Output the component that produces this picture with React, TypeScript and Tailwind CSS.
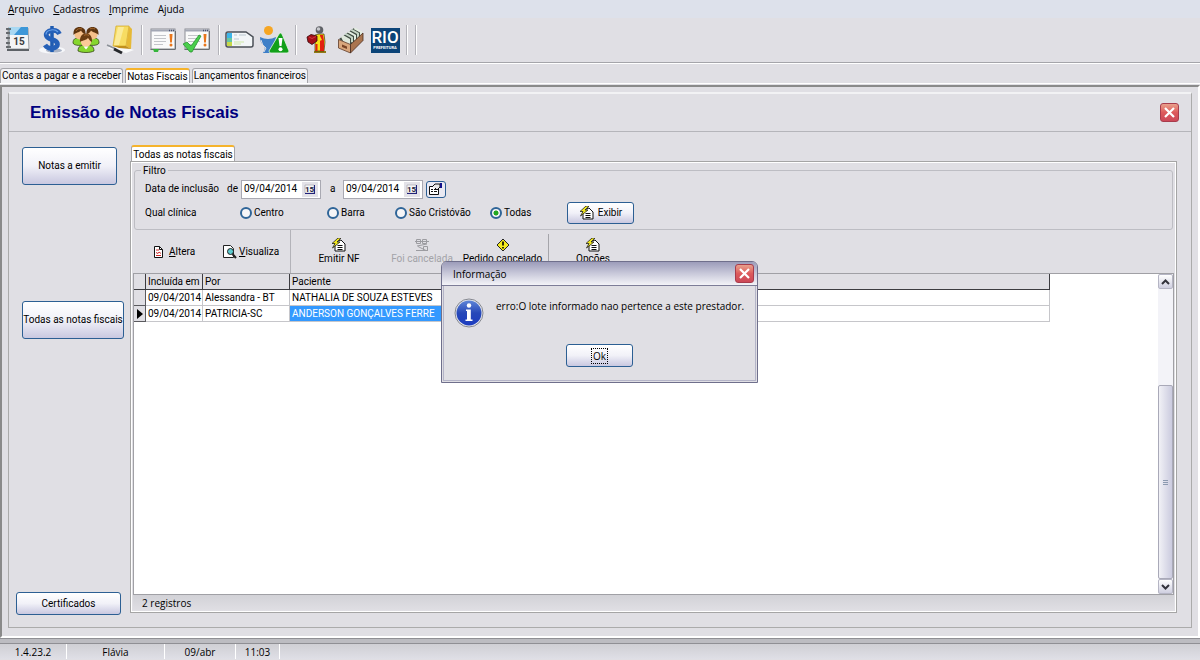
import type { ReactNode } from 'react';
import clsx from 'clsx';

const BUTTON =
  'rounded-[3px] border border-[#2c5f93] bg-linear-to-b from-white via-[#f1f1f8] to-[#c9c8e0] text-black';

const MENU = ['Arquivo', 'Cadastros', 'Imprime', 'Ajuda'];
const TABS = ['Contas a pagar e a receber', 'Notas Fiscais', 'Lançamentos financeiros'];

function CalendarIcon() {
  return (
    <svg width="26" height="28" viewBox="0 0 26 28">
      <path d="M3 2h20l1 21H3z" fill="#f4f5f6" stroke="#9aa0a6" />
      <path d="M4 1h19v8H4z" fill="#3d97d8" />
      <path d="M4 1h12l-7 8H4z" fill="#a9d8f2" />
      <path d="M2 23h22v2H2z" fill="#5d6166" />
      <path d="M1 3h5M1 7h4M1 12h4M1 17h4M1 21h5" stroke="#44484c" strokeWidth="1.5" />
      <path d="M4 2v20" stroke="#6a6e73" />
      <text x="14" y="19" textAnchor="middle" fontSize="10" fontWeight="bold" fill="#3a3d42">15</text>
    </svg>
  );
}

function DollarIcon() {
  return (
    <svg width="28" height="28" viewBox="0 0 28 28">
      <ellipse cx="14" cy="24" rx="13" ry="3.5" fill="#f6f7fa" />
      <ellipse cx="16" cy="24.5" rx="8" ry="2" fill="#aab4c6" />
      <path d="M14 0v26" stroke="#1f5bb0" strokeWidth="3.5" />
      <path
        d="M21.500 8c-1.500-3-5-4-8-3.500c-4 .5-6 3-5 5.500c1 3 5 3 8 4.500c4 2 4 6-.5 7.500c-4 1-7 0-9-3"
        fill="none"
        stroke="#2560b8"
        strokeWidth="4.800"
      />
      <path d="M20 6c-2-2-5-2.500-7-2c-3 .5-5 2-5 4.500" fill="none" stroke="#6ba3ea" strokeWidth="1.200" />
    </svg>
  );
}

function PeopleIcon() {
  return (
    <svg width="28" height="28" viewBox="0 0 28 28">
      <g stroke="#27340c" strokeWidth="0.7">
        <path d="M1 17c0-4 2-5 6-5s7 2 7 6c-4 2-12 2-13-1z" fill="#86d62e" />
        <path d="M27 17c0-4-2-5-6-5s-7 2-7 6c4 2 12 2 13-1z" fill="#86d62e" />
        <path d="M6 25c0-5 3-6 8-6s8 1 8 6c-4 2-12 2-16 0z" fill="#86d62e" />
      </g>
      <circle cx="7.500" cy="8.500" r="5" fill="#f6c08a" />
      <circle cx="20.500" cy="8.500" r="5" fill="#f6c08a" />
      <path d="M1.500 9C1 3 4 1 7.500 1S14 3 13.500 8C11 8 10 6 9 4.500C7 7 4 6 1.500 9z" fill="#5d3410" />
      <path d="M26.500 9C27 3 24 1 20.500 1S14 3 14.500 8C17 8 18 6 19 4.500C21 7 24 6 26.500 9z" fill="#5d3410" />
      <circle cx="14" cy="15.500" r="5.200" fill="#fbca98" />
      <path d="M8 16c-.5-6 2.500-8.500 6-8.500s6.500 2.500 6 8.500c-2-1-3-2.500-4-4c-2 2.500-5 2-8 4z" fill="#6b3d12" />
      <path d="M10 3c-3-1-5 0-6 2M23 3c-2-1-4-1-5 0M17 9.500c-2-1-4-1-5 0" stroke="#a8692c" fill="none" />
      <path d="M11.500 20.500l2.500 3l2.500-3z" fill="#fff" />
    </svg>
  );
}

function NoteIcon() {
  return (
    <svg width="28" height="30" viewBox="0 0 28 30">
      <path d="M1 23l9-3l18 5l-8 3z" fill="#f8f8f9" />
      <path d="M10 1h13l-3 20H7z" fill="#f7dc62" stroke="#d0a828" strokeWidth="0.700" />
      <path d="M12 2h6l-5 18H8z" fill="#fbeb98" />
      <path d="M23 1l3 3l-1 20l-5-3z" fill="#e6b936" />
      <path d="M7 21h13l5 3l-12-1z" fill="#c18f1c" />
      <path d="M1 20l9 4" stroke="#8b9097" strokeWidth="1.500" />
      <path d="M8 24l8 4" stroke="#25272b" strokeWidth="3" />
    </svg>
  );
}

function ListIcon({ checked }: { checked?: boolean }) {
  return (
    <svg width="28" height="28" viewBox="0 0 28 28">
      <rect x="2" y="3" width="24" height="20" fill="#fafafa" stroke="#8b8e93" />
      <path d="M2 4.500h24" stroke="#a3a7b4" strokeWidth="2" />
      <path d="M20 4.500h5" stroke="#48506e" strokeWidth="1.500" strokeDasharray="1 1" />
      <path d="M5 9.500h12M5 12.500h12M5 15.500h12M5 18.500h9" stroke="#c3c5c9" />
      <path d="M1.500 23.500h25M26.500 5v18" stroke="#6b6e72" />
      <path d="M20.500 8h3l-.6 8.500h-1.800z" fill="#e8761c" />
      <circle cx="22" cy="19" r="1.500" fill="#e8761c" />
      {checked ? (
        <path d="M0 18l4-2l4 4l8-11l2 1l-9 16H7z" fill="#4ace4c" stroke="#1c8a27" strokeWidth="0.700" />
      ) : (
        <path d="M4 23h6l-1 3H5z" fill="#36b53c" />
      )}
    </svg>
  );
}

function CardIcon() {
  return (
    <svg width="30" height="20" viewBox="0 0 30 20">
      <path d="M3 2h18l7 5v8q0 2-2 2H3q-2 0-2-2V4q0-2 2-2z" fill="#f3f6f8" stroke="#4b5057" strokeWidth="1.500" />
      <path d="M2 3h5v5H2z" fill="#3db4e8" />
      <path d="M2 8h5v4H2z" fill="#67c7a2" />
      <path d="M2 12h5v4H2z" fill="#c6d848" />
      <path d="M9 5h3M14 5h7M9 9h5" stroke="#bcc9d2" />
      <path d="M9 12h10M9 14h7" stroke="#cfe9a8" />
    </svg>
  );
}

function PersonAlertIcon() {
  return (
    <svg width="30" height="30" viewBox="0 0 30 30">
      <circle cx="9.500" cy="5.500" r="4.500" fill="#f6a623" />
      <path d="M1 12q8 4 16 0l-3 16H4q3-5 1-7q-4-3-4-9z" fill="#3e7fc8" />
      <path d="M2 15q1 6 5 8l-2 4" stroke="#e0dfe4" fill="none" />
      <path d="M20 9q1.500-2 3 0l7 17q0 2-2 2H12q-2 0-2-2z" fill="#12a019" stroke="#e8f4e8" strokeWidth="0.800" />
      <path d="M19.500 13h4l-1 8h-2z" fill="#fff" />
      <circle cx="21.500" cy="24.300" r="2" fill="#fff" />
    </svg>
  );
}

function FigureIcon() {
  return (
    <svg width="22" height="30" viewBox="0 0 22 30">
      <path d="M8 26h12v2H8z" fill="#8f7a16" />
      <path d="M9 10l4-1h5l1 8l-1 9H9z" fill="#f7e016" stroke="#2a1c08" strokeWidth="0.6" />
      <path d="M14 10h3l1 6v10h-4z" fill="#e2200f" />
      <path d="M9.500 19h2v7h-2z" fill="#e2200f" />
      <path d="M9 10l5 1l2 4l-5 2z" fill="#f7e016" />
      <path d="M1 12l4-2.500l6 1.500v5l-5 3.500l-4-2.500z" fill="#a60f18" stroke="#35070a" strokeWidth="0.8" />
      <path d="M3 12l3 1.500l4-2" stroke="#e0454c" strokeWidth="0.8" fill="none" />
      <circle cx="13.500" cy="5" r="3.800" fill="#5f6166" />
      <circle cx="12.500" cy="4" r="1.800" fill="#c9cace" />
    </svg>
  );
}

function FileBoxIcon() {
  return (
    <svg width="28" height="30" viewBox="0 0 28 30">
      <path d="M2 14L17 3l9 6l-11 13z" fill="#3f4b42" />
      <path d="M4 12l2-2l7 4v6l-6-2z" fill="#dfe8dc" />
      <path d="M7.500 9.500l1.500-1.500l7 4v6l-2-1v-4z" fill="#c5d5c6" />
      <path d="M10.500 7.500l1.500-1.500l7 4v5l-2 1v-5z" fill="#e4ede2" />
      <path d="M13.500 5.500l1.500-1.500l7 4v4l-2 2v-5z" fill="#c5d5c6" />
      <path d="M16.500 4l1.500-1.500l7 4v3l-2 2V7.500z" fill="#e4ede2" />
      <path d="M1.500 14.500l12 5v8.500l-12-5z" fill="#d9a67c" stroke="#5e3b28" strokeWidth="0.8" />
      <path d="M13.500 19.500L26 8v7.500L13.500 28z" fill="#a9744f" stroke="#4a2d20" strokeWidth="0.8" />
      <path d="M5 19.500l5 2v2.500l-5-2z" fill="#7a4426" />
    </svg>
  );
}

function LightningPageIcon() {
  return (
    <svg width="16" height="14" viewBox="0 0 16 14">
      <path d="M5 4l5-2l4 4v7H4V7z" fill="#fff" stroke="#111" />
      <path d="M6.500 7.500h5M6.500 9.500h5M6.500 11.500h5" stroke="#111" />
      <path d="M7 0L1 5.500h3L1.500 10L9 4H6l4-4z" fill="#f4ea1c" stroke="#222" strokeWidth="0.800" />
    </svg>
  );
}

function CancelledIcon() {
  return (
    <svg width="16" height="14" viewBox="0 0 16 14" fill="none" stroke="#9c9ca1">
      <path d="M2.500 1.500h4v4h-4zM8.500 1.500h4v4h-4zM1 3.500h14M3 8l10-2M4 8.500l8 4M2 12.500h12M9.500 8.500h4v4h-4z" />
    </svg>
  );
}

function WarningIcon() {
  return (
    <svg width="14" height="14" viewBox="0 0 14 14">
      <path d="M7 1l6 6l-6 6l-6-6z" fill="#f4ea1c" stroke="#222" />
      <path d="M7 3.500v4M7 9v1.500" stroke="#000" strokeWidth="1.600" />
    </svg>
  );
}

function EditPageIcon() {
  return (
    <svg width="12" height="14" viewBox="0 0 12 14">
      <path d="M1.500 1.500h5l3 3v8h-8z" fill="#fff" stroke="#111" />
      <path d="M6.500 1.500v3h3" fill="none" stroke="#111" />
      <path d="M3 5h3M3 7.500l2 1l1-1.500l2 1.500M3 10.500h5" stroke="#d02a2a" fill="none" />
    </svg>
  );
}

function PreviewIcon() {
  return (
    <svg width="15" height="15" viewBox="0 0 15 15">
      <path d="M1.500 1.500h7l3 3v9h-10z" fill="#fff" stroke="#222" />
      <circle cx="8.500" cy="7.500" r="3" fill="#5ccbd0" stroke="#222" />
      <path d="M10.500 10l3.500 4" stroke="#222" strokeWidth="2" />
    </svg>
  );
}

function PropertiesIcon() {
  return (
    <svg width="15" height="14" viewBox="0 0 15 14">
      <path d="M1.500 4.500h9v8h-9z" fill="#fff" stroke="#111" />
      <path d="M3 7.500h2M3 9.500h2M6 7.500h3M6 9.500h3" stroke="#111" />
      <path d="M4 5l3-3h5v3l-3 3l-2-2" fill="#e8e8e8" stroke="#111" />
      <path d="M12 1h2v5h-2z" fill="#12128a" />
    </svg>
  );
}

function MiniCalendarIcon() {
  return (
    <svg width="12" height="11" viewBox="0 0 12 11">
      <path d="M1 1h9v8H1z" fill="#f6f6f6" stroke="#8f8f98" strokeWidth="0.500" />
      <path d="M1 9.500h10M10.500 1v9" stroke="#22227a" />
      <text x="5.500" y="8" textAnchor="middle" fontSize="8" fontWeight="bold" fill="#1c1c3c">15</text>
    </svg>
  );
}

function InfoIcon() {
  return (
    <svg width="30" height="30" viewBox="0 0 30 30">
      <defs>
        <linearGradient id="info" x1="0" y1="0" x2="0" y2="1">
          <stop offset="0" stopColor="#5f86d8" />
          <stop offset="0.5" stopColor="#2748b8" />
          <stop offset="1" stopColor="#1d3cc0" />
        </linearGradient>
      </defs>
      <circle cx="15" cy="15" r="14" fill="#e4e6ec" stroke="#85878f" />
      <circle cx="15" cy="15" r="12.500" fill="url(#info)" />
      <circle cx="15" cy="7.500" r="2.200" fill="#fff" />
      <path d="M12 11.500h4.800v10H18.500v1.500h-7v-1.500H13v-8.500h-1z" fill="#fff" />
    </svg>
  );
}

function CloseButton({ label }: { label: string }) {
  return (
    <button
      type="button"
      aria-label={label}
      className="flex size-[19px] shrink-0 items-center justify-center rounded-[3px] border border-[#a83c4c] bg-linear-to-b from-[#e8a08c] via-[#dd5a5c] to-[#cc4858]"
    >
      <svg width="13" height="13" viewBox="0 0 13 13">
        <path d="M2 2l9 9M11 2l-9 9" stroke="#fff" strokeWidth="2.200" />
      </svg>
    </button>
  );
}

function ToolButton({ label, children }: { label: string; children: ReactNode }) {
  return (
    <button type="button" aria-label={label} className="flex h-8 w-[34px] items-center justify-center">
      {children}
    </button>
  );
}

function Separator() {
  return <div className="mr-[3px] ml-1 h-[30px] w-[2px] border-l border-[#b3b3b9] bg-white" />;
}

function DateField({ id, label }: { id: string; label: string }) {
  return (
    <>
      <label htmlFor={id} className="min-w-[10px]">{label}</label>
      <div className="flex h-[19px] w-20 items-center border border-[#a9a9b2] bg-white">
        <input id={id} defaultValue="09/04/2014" className="w-[60px] min-w-0 pl-[2px] outline-none" />
        <button
          type="button"
          aria-label="Abrir calendário"
          className="flex h-[15px] w-4 items-center justify-center bg-[#e3e2e8]"
        >
          <MiniCalendarIcon />
        </button>
      </div>
    </>
  );
}

function ClinicRadio({ label, checked, className }: { label: string; checked?: boolean; className: string }) {
  return (
    <label className={clsx('flex shrink-0 items-center gap-[2px]', className)}>
      <input
        type="radio"
        name="clinica"
        defaultChecked={checked}
        className="size-3 appearance-none rounded-full border-2 border-[#2f6598] bg-[#f5f5f7] checked:bg-radial checked:from-[#22a822] checked:from-40% checked:to-[#f5f5f7] checked:to-50%"
      />
      {label}
    </label>
  );
}

function StackedAction({
  label,
  icon,
  className,
  disabled,
}: {
  label: string;
  icon: ReactNode;
  className: string;
  disabled?: boolean;
}) {
  return (
    <button
      type="button"
      disabled={disabled}
      className={clsx('flex flex-col items-center whitespace-nowrap disabled:text-[#a3a3a8]', className)}
    >
      {icon}
      {label}
    </button>
  );
}

function Menubar() {
  return (
    <nav className="flex h-[18px] items-center gap-[9px] bg-[#dde1eb] pl-2 font-['Open_Sans',sans-serif]">
      {MENU.map((item) => (
        <button key={item} type="button">
          {item === 'Ajuda' ? (
            item
          ) : (
            <>
              <span className="underline">{item[0]}</span>
              {item.slice(1)}
            </>
          )}
        </button>
      ))}
    </nav>
  );
}

function Toolbar() {
  return (
    <div className="flex h-[45px] items-center border-b border-[#a5a5aa] pl-px">
      <ToolButton label="Agenda"><CalendarIcon /></ToolButton>
      <ToolButton label="Financeiro"><DollarIcon /></ToolButton>
      <ToolButton label="Pacientes"><PeopleIcon /></ToolButton>
      <ToolButton label="Anotações"><NoteIcon /></ToolButton>
      <Separator />
      <ToolButton label="Pendências"><ListIcon /></ToolButton>
      <ToolButton label="Concluídas"><ListIcon checked /></ToolButton>
      <Separator />
      <ToolButton label="Cartão"><CardIcon /></ToolButton>
      <ToolButton label="Alertas"><PersonAlertIcon /></ToolButton>
      <Separator />
      <ToolButton label="Entregas"><FigureIcon /></ToolButton>
      <ToolButton label="Arquivo de fichas"><FileBoxIcon /></ToolButton>
      <ToolButton label="Rio Prefeitura">
        <span className="flex h-[25px] w-[29px] flex-col items-center bg-[#0c4478] text-white">
          <span className="text-[17px] leading-[18px] font-medium">RIO</span>
          <span className="text-[4px] leading-[4px] font-bold">PREFEITURA</span>
        </span>
      </ToolButton>
      <Separator />
      <Separator />
    </div>
  );
}

function WindowTabs() {
  return (
    <div className="flex h-[21px] items-end gap-[2px] border-y border-white">
      {TABS.map((tab) => (
        <button
          key={tab}
          type="button"
          className={clsx(
            'h-[15px] rounded-t-[3px] border border-b-0 px-px whitespace-nowrap',
            tab === 'Notas Fiscais'
              ? 'border-[#a5a5aa] border-t-2 border-t-[#f5b32c] bg-white leading-[13px]'
              : 'border-[#a5a5aa] bg-[#f3f3f6] leading-[14px]',
          )}
        >
          {tab}
        </button>
      ))}
    </div>
  );
}

function Sidebar() {
  return (
    <aside className="flex w-[121px] shrink-0 flex-col justify-between pt-[15px] pb-3">
      <div className="flex flex-col items-start pl-[13px]">
        <button type="button" className={clsx(BUTTON, 'h-[38px] w-[95px]')}>Notas a emitir</button>
        <button type="button" className={clsx(BUTTON, 'mt-[116px] h-[38px] w-[102px] whitespace-nowrap')}>
          Todas as notas fiscais
        </button>
      </div>
      <div className="pl-[7px]">
        <button type="button" className={clsx(BUTTON, 'h-[23px] w-[105px]')}>Certificados</button>
      </div>
    </aside>
  );
}

function Filter() {
  return (
    <fieldset className="relative mx-[2px] mt-[7px] h-[60px] rounded-[3px] border border-[#bdbdc3] pl-[10px]">
      <legend className="absolute -top-[7px] left-[6px] bg-[#e0dfe4] px-[2px] leading-[14px]">Filtro</legend>
      <div className="mt-2 flex h-5 items-center gap-[3px]">
        <span className="w-[79px]">Data de inclusão</span>
        <DateField id="de" label="de" />
        <span className="w-[3px]" />
        <DateField id="ate" label="a" />
        <button
          type="button"
          aria-label="Período"
          className="flex h-[17px] w-5 items-center justify-center rounded-[3px] border border-[#2c5f93] bg-[#e9e9f2]"
        >
          <PropertiesIcon />
        </button>
      </div>
      <div className="mt-[2px] flex h-6 items-center">
        <span className="w-[95px]">Qual clínica</span>
        <ClinicRadio label="Centro" className="w-[87px]" />
        <ClinicRadio label="Barra" className="w-[68px]" />
        <ClinicRadio label="São Cristóvão" className="w-[95px]" />
        <ClinicRadio label="Todas" checked className="w-[77px]" />
        <button type="button" className={clsx(BUTTON, 'flex h-[22px] w-[67px] items-center justify-center gap-[3px]')}>
          <LightningPageIcon />
          Exibir
        </button>
      </div>
    </fieldset>
  );
}

function Actions() {
  return (
    <div className="flex h-[43px] items-center">
      <div className="flex h-full w-[159px] items-center border-r border-[#b3b3b9] pl-[21px]">
        <button type="button" className="flex w-[69px] items-center gap-1">
          <EditPageIcon />
          <span><span className="underline">A</span>ltera</span>
        </button>
        <button type="button" className="flex items-center gap-[2px]">
          <PreviewIcon />
          <span><span className="underline">V</span>isualiza</span>
        </button>
      </div>
      <StackedAction label="Emitir NF" icon={<LightningPageIcon />} className="w-24" />
      <StackedAction label="Foi cancelada" icon={<CancelledIcon />} className="w-[70px]" disabled />
      <StackedAction label="Pedido cancelado" icon={<WarningIcon />} className="w-[91px]" />
      <div className="h-9 w-px bg-[#a5a5aa]" />
      <StackedAction label="Opções" icon={<LightningPageIcon />} className="w-[88px]" />
    </div>
  );
}

function InvoiceTable() {
  const head = 'h-4 border-r border-b border-[#3c3c40] bg-[#e0dfe4] px-[2px] text-left font-normal';
  const line = 'h-4 border-r border-b border-[#c6c6ca]';
  const cell = clsx(line, 'px-[2px]');
  return (
    <table className="h-fit w-[916px] table-fixed border-separate border-spacing-0 leading-[15px] whitespace-nowrap">
      <thead>
        <tr>
          <th className={clsx(head, 'w-[12px]')} aria-label="Atual" />
          <th className={clsx(head, 'w-[57px]')}>Incluída em</th>
          <th className={clsx(head, 'w-[87px]')}>Por</th>
          <th className={head}>Paciente</th>
        </tr>
      </thead>
      <tbody>
        <tr>
          <td className="border-r border-b border-[#5a5a5e] bg-[#e0dfe4]" />
          <td className={cell}>09/04/2014</td>
          <td className={cell}>Alessandra - BT</td>
          <td className={cell}>NATHALIA DE SOUZA ESTEVES</td>
        </tr>
        <tr>
          <td className="border-r border-b border-[#5a5a5e] bg-[#e0dfe4]">
            <svg width="8" height="10" viewBox="0 0 8 10" className="ml-[2px]">
              <path d="M1 0l6 5l-6 5z" fill="#000" />
            </svg>
          </td>
          <td className={cell}>09/04/2014</td>
          <td className={cell}>PATRICIA-SC</td>
          <td className={line}>
            <div className="w-40 bg-[#3399ff] px-[2px] text-white">ANDERSON GONÇALVES FERRE</div>
          </td>
        </tr>
      </tbody>
    </table>
  );
}

function ScrollArrow({ label, d }: { label: string; d: string }) {
  return (
    <button
      type="button"
      aria-label={label}
      className="flex h-[15px] items-center justify-center rounded-[2px] border border-[#b5b5c4] bg-linear-to-b from-white to-[#cfcfe0]"
    >
      <svg width="9" height="6" viewBox="0 0 9 6">
        <path d={d} fill="none" stroke="#33333c" strokeWidth="2" />
      </svg>
    </button>
  );
}

function Scrollbar() {
  return (
    <div className="flex w-[15px] shrink-0 flex-col bg-[#f3f3f8]">
      <ScrollArrow label="Rolar para cima" d="M1 5l3.500-3.500L8 5" />
      <div className="flex-[97]" />
      <div className="flex flex-[193] flex-col items-center justify-center gap-px rounded-[2px] border border-[#a9a9b8] bg-linear-to-r from-[#f1f1f6] to-[#cbcbdf]">
        <div className="h-px w-[5px] bg-[#8c9ab0]" />
        <div className="h-px w-[5px] bg-[#8c9ab0]" />
        <div className="h-px w-[5px] bg-[#8c9ab0]" />
      </div>
      <ScrollArrow label="Rolar para baixo" d="M1 1l3.500 3.500L8 1" />
    </div>
  );
}

function InvoicePanel() {
  return (
    <main className="flex min-w-0 flex-1 flex-col pt-[13px] pr-[14px] pb-[14px]">
      <div className="flex">
        <button
          type="button"
          className="ml-px h-4 w-[104px] rounded-t-[3px] border border-t-2 border-b-0 border-[#a5a5aa] border-t-[#f5b32c] bg-white leading-[13px] whitespace-nowrap"
        >
          Todas as notas fiscais
        </button>
      </div>
      <section className="flex flex-1 flex-col border border-[#a5a5a5] p-px outline-1 -outline-offset-2 outline-white">
        <Filter />
        <Actions />
        <div className="mx-px flex flex-1 border border-[#a0a0a5] bg-white">
          <InvoiceTable />
          <div className="flex-1" />
          <Scrollbar />
        </div>
        <p className="mx-px flex h-4 items-center bg-linear-to-b from-[#d2d2d7] to-[#e0dfe4] pl-[9px] font-['Open_Sans',sans-serif]">
          2 registros
        </p>
      </section>
    </main>
  );
}

function StatusBar() {
  const cell = 'flex h-full items-center justify-center border-r border-white';
  return (
    <footer className="mb-px flex h-4 items-center border-t border-[#8f8f94] bg-linear-to-b from-[#cfcfd4] to-[#dfdfe6] font-['Open_Sans',sans-serif]">
      <span className={clsx(cell, 'w-[67px]')}>1.4.23.2</span>
      <span className={clsx(cell, 'w-[98px]')}>Flávia</span>
      <span className={clsx(cell, 'w-[71px]')}>09/abr</span>
      <span className={clsx(cell, 'w-[44px]')}>11:03</span>
    </footer>
  );
}

function ErrorDialog() {
  return (
    <div className="fixed inset-0 flex items-center justify-center pr-px pb-4 font-['Open_Sans',sans-serif]">
      <div
        role="dialog"
        aria-labelledby="dialog-title"
        className="w-[317px] overflow-hidden rounded-t-[6px] border border-[#6f6f8c] bg-[#e0dfe4]"
      >
        <header className="flex h-6 items-center justify-between border-b border-[#7d7d98] bg-linear-to-b from-[#9c9cba] via-[#c9c9da] to-[#f4f4f8] pr-[3px] pl-[11px]">
          <h2 id="dialog-title">Informação</h2>
          <CloseButton label="Fechar aviso" />
        </header>
        <div className="mx-px mb-px flex flex-col border border-t-0 border-[#b4b4c8] px-[10px] pt-3 pb-[13px]">
          <div className="flex gap-3">
            <InfoIcon />
            <p className="pt-px whitespace-nowrap">erro:O lote informado nao pertence a este prestador.</p>
          </div>
          <button type="button" className={clsx(BUTTON, 'mt-4 flex h-[23px] w-[67px] items-center justify-center self-center')}>
            <span className="border border-dotted border-black px-px leading-[14px]">Ok</span>
          </button>
        </div>
      </div>
    </div>
  );
}

export default function App() {
  return (
    <div className="flex min-h-screen flex-col bg-[#e0dfe4] font-[Roboto,sans-serif] text-[10px] leading-[14px] text-black">
      <Menubar />
      <Toolbar />
      <WindowTabs />
      <div className="mt-px flex flex-1 flex-col border-2 border-[#8a8a8a] border-r-white border-b-white px-[6px] pt-[5px] pb-2">
        <div className="flex flex-1 flex-col border border-t-2 border-[#ababab] border-t-[#f2f2f4]">
          <header className="flex h-[38px] items-center justify-between border-b border-[#b5b5ba] pr-3 pl-[21px]">
            <h1 className="font-['Liberation_Sans',sans-serif] text-[17px] font-bold text-[#00007f]">
              Emissão de Notas Fiscais
            </h1>
            <CloseButton label="Fechar" />
          </header>
          <div className="flex flex-1">
            <Sidebar />
            <InvoicePanel />
          </div>
        </div>
      </div>
      <div className="h-[5px] border-t border-[#8f8f94] bg-[#bcbcc1]" />
      <StatusBar />
      <ErrorDialog />
    </div>
  );
}
